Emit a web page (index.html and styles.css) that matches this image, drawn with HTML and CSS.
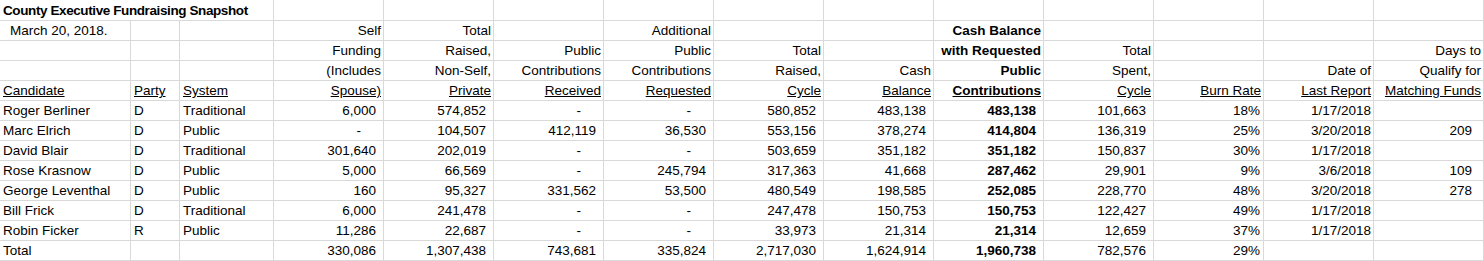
FILE: index.html
```html
<!DOCTYPE html>
<html lang="en">
<head>
<meta charset="utf-8">
<title>County Executive Fundraising Snapshot</title>
<link rel="stylesheet" href="styles.css">
</head>
<body>
<div class="sheet">
  <!-- row 1 -->
  <div class="c first title">County Executive Fundraising Snapshot</div>
  <div class="c first"></div><div class="c first"></div><div class="c first"></div><div class="c first"></div><div class="c first"></div><div class="c first"></div><div class="c first"></div><div class="c first"></div><div class="c first"></div><div class="c first"></div><div class="c first"></div>
  <!-- row 2 -->
  <div class="c date-label">March 20, 2018.</div>
  <div class="c"></div><div class="c"></div>
  <div class="c h">Self</div>
  <div class="c h">Total</div>
  <div class="c"></div>
  <div class="c h">Additional</div>
  <div class="c"></div><div class="c"></div>
  <div class="c h b">Cash Balance</div>
  <div class="c"></div><div class="c"></div><div class="c"></div><div class="c"></div>
  <!-- row 3 -->
  <div class="c"></div><div class="c"></div><div class="c"></div>
  <div class="c h">Funding</div>
  <div class="c h">Raised,</div>
  <div class="c h">Public</div>
  <div class="c h">Public</div>
  <div class="c h">Total</div>
  <div class="c"></div>
  <div class="c h b">with Requested</div>
  <div class="c h">Total</div>
  <div class="c"></div><div class="c"></div>
  <div class="c h">Days to</div>
  <!-- row 4 -->
  <div class="c"></div><div class="c"></div><div class="c"></div>
  <div class="c h">(Includes</div>
  <div class="c h">Non-Self,</div>
  <div class="c h">Contributions</div>
  <div class="c h">Contributions</div>
  <div class="c h">Raised,</div>
  <div class="c h">Cash</div>
  <div class="c h b">Public</div>
  <div class="c h">Spent,</div>
  <div class="c"></div>
  <div class="c h">Date of</div>
  <div class="c h">Qualify for</div>
  <!-- row 5 -->
  <div class="c u">Candidate</div>
  <div class="c u">Party</div>
  <div class="c u">System</div>
  <div class="c h u">Spouse)</div>
  <div class="c h u">Private</div>
  <div class="c h u">Received</div>
  <div class="c h u">Requested</div>
  <div class="c h u">Cycle</div>
  <div class="c h u">Balance</div>
  <div class="c h u b">Contributions</div>
  <div class="c h u">Cycle</div>
  <div class="c h u">Burn Rate</div>
  <div class="c h u">Last Report</div>
  <div class="c h u">Matching Funds</div>
  <!-- Roger Berliner -->
  <div class="c">Roger Berliner</div><div class="c">D</div><div class="c">Traditional</div>
  <div class="c n">6,000</div><div class="c n">574,852</div><div class="c n dash">-</div><div class="c n dash">-</div>
  <div class="c n">580,852</div><div class="c n">483,138</div><div class="c n b">483,138</div><div class="c n">101,663</div>
  <div class="c pct">18%</div><div class="c dt">1/17/2018</div><div class="c days"></div>
  <!-- Marc Elrich -->
  <div class="c">Marc Elrich</div><div class="c">D</div><div class="c">Public</div>
  <div class="c n dash">-</div><div class="c n">104,507</div><div class="c n">412,119</div><div class="c n">36,530</div>
  <div class="c n">553,156</div><div class="c n">378,274</div><div class="c n b">414,804</div><div class="c n">136,319</div>
  <div class="c pct">25%</div><div class="c dt">3/20/2018</div><div class="c days">209</div>
  <!-- David Blair -->
  <div class="c">David Blair</div><div class="c">D</div><div class="c">Traditional</div>
  <div class="c n">301,640</div><div class="c n">202,019</div><div class="c n dash">-</div><div class="c n dash">-</div>
  <div class="c n">503,659</div><div class="c n">351,182</div><div class="c n b">351,182</div><div class="c n">150,837</div>
  <div class="c pct">30%</div><div class="c dt">1/17/2018</div><div class="c days"></div>
  <!-- Rose Krasnow -->
  <div class="c">Rose Krasnow</div><div class="c">D</div><div class="c">Public</div>
  <div class="c n">5,000</div><div class="c n">66,569</div><div class="c n dash">-</div><div class="c n">245,794</div>
  <div class="c n">317,363</div><div class="c n">41,668</div><div class="c n b">287,462</div><div class="c n">29,901</div>
  <div class="c pct">9%</div><div class="c dt">3/6/2018</div><div class="c days">109</div>
  <!-- George Leventhal -->
  <div class="c">George Leventhal</div><div class="c">D</div><div class="c">Public</div>
  <div class="c n">160</div><div class="c n">95,327</div><div class="c n">331,562</div><div class="c n">53,500</div>
  <div class="c n">480,549</div><div class="c n">198,585</div><div class="c n b">252,085</div><div class="c n">228,770</div>
  <div class="c pct">48%</div><div class="c dt">3/20/2018</div><div class="c days">278</div>
  <!-- Bill Frick -->
  <div class="c">Bill Frick</div><div class="c">D</div><div class="c">Traditional</div>
  <div class="c n">6,000</div><div class="c n">241,478</div><div class="c n dash">-</div><div class="c n dash">-</div>
  <div class="c n">247,478</div><div class="c n">150,753</div><div class="c n b">150,753</div><div class="c n">122,427</div>
  <div class="c pct">49%</div><div class="c dt">1/17/2018</div><div class="c days"></div>
  <!-- Robin Ficker -->
  <div class="c">Robin Ficker</div><div class="c">R</div><div class="c">Public</div>
  <div class="c n">11,286</div><div class="c n">22,687</div><div class="c n dash">-</div><div class="c n dash">-</div>
  <div class="c n">33,973</div><div class="c n">21,314</div><div class="c n b">21,314</div><div class="c n">12,659</div>
  <div class="c pct">37%</div><div class="c dt">1/17/2018</div><div class="c days"></div>
  <!-- Total -->
  <div class="c">Total</div><div class="c"></div><div class="c"></div>
  <div class="c n">330,086</div><div class="c n">1,307,438</div><div class="c n">743,681</div><div class="c n">335,824</div>
  <div class="c n">2,717,030</div><div class="c n">1,624,914</div><div class="c n b">1,960,738</div><div class="c n">782,576</div>
  <div class="c pct">29%</div><div class="c dt"></div><div class="c days"></div>
</div>
</body>
</html>
```

FILE: styles.css
```css
html, body {
  margin: 0;
  padding: 0;
  background: #ffffff;
}

.sheet {
  display: grid;
  grid-template-columns: 131px 49px 94px repeat(11, 110px);
  grid-template-rows: 21px repeat(12, 20px);
  width: 1484px;
  font-family: "Liberation Sans", Arial, sans-serif;
  font-size: 13.5px;
  color: #000000;
}

.c {
  box-sizing: border-box;
  border-right: 1px solid #d9d9d9;
  border-bottom: 1px solid #d9d9d9;
  padding: 0 2px 0 3px;
  line-height: 19px;
  white-space: nowrap;
  overflow: visible;
}

.first {
  padding-top: 1px;
}

.title {
  grid-column: span 3;
  font-weight: bold;
  letter-spacing: -0.4px;
}

.date-label {
  padding-left: 10px;
}

.h {
  text-align: right;
}

.b {
  font-weight: bold;
}

.u {
  text-decoration: underline;
  text-underline-offset: 1px;
}

.n {
  text-align: right;
  padding-right: 7px;
}

.n.dash {
  padding-right: 22px;
}

.pct {
  text-align: right;
  padding-right: 3px;
}

.dt {
  text-align: right;
  padding-right: 2px;
}

.days {
  text-align: right;
  padding-right: 11px;
}
```
